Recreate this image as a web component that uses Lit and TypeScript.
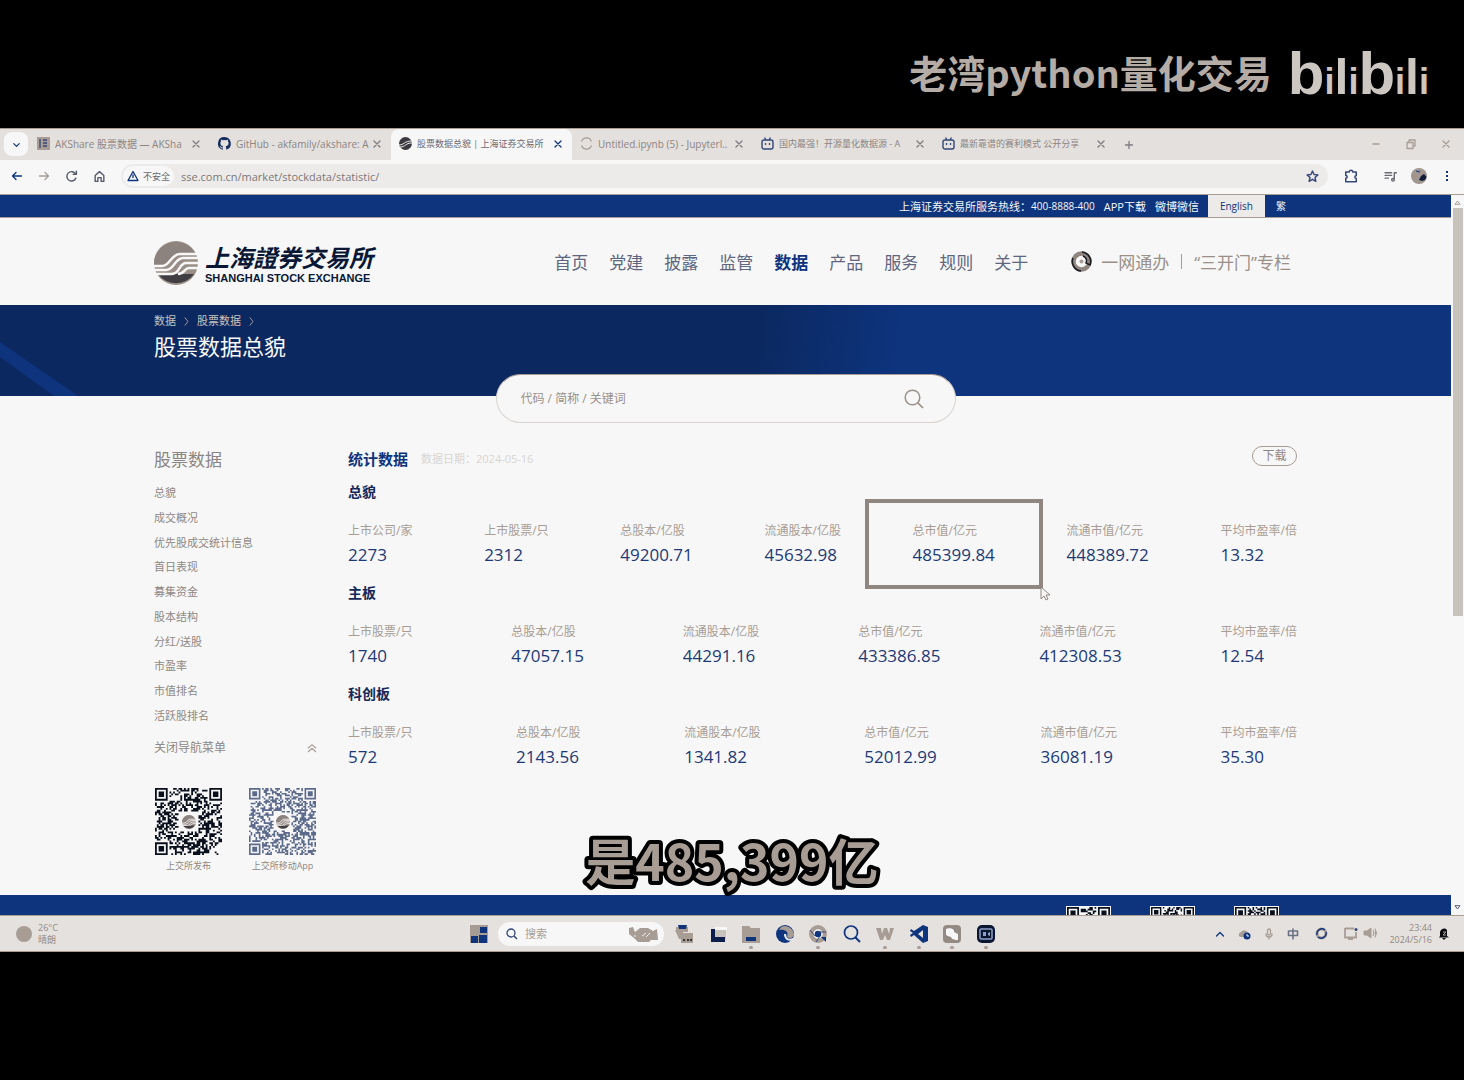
import { LitElement, html, svg, css, nothing, type TemplateResult } from "lit";
import { customElement, property } from "lit/decorators.js";
import { classMap } from "lit/directives/class-map.js";

const BLUE = "#0e347e";
const TAUPE = "#a89d95";

const shared = css`
  * { box-sizing: border-box; }
  button, input { font: inherit; color: inherit; border: 0; background: none; padding: 0; margin: 0; outline: 0; }
  a { color: inherit; text-decoration: none; }
  ul, dl, dd, h1, h2, h3, p { margin: 0; padding: 0; list-style: none; font-weight: inherit; font-size: inherit; }
  svg { display: block; flex: none; }
`;

/** Builds the dark modules of a QR-like symbol as a single path. */
function qrPath(n: number, seed: number): string {
  const finder = (x: number, y: number): boolean | null => {
    for (const [fx, fy] of [[0, 0], [n - 7, 0], [0, n - 7]]) {
      const dx = x - fx, dy = y - fy;
      if (dx >= -1 && dx <= 7 && dy >= -1 && dy <= 7) {
        const r = Math.max(Math.abs(dx - 3), Math.abs(dy - 3));
        return r === 3 || r <= 1;
      }
    }
    return null;
  };
  let s = seed, d = "";
  for (let y = 0; y < n; y++) {
    for (let x = 0; x < n; x++) {
      s = (s * 1103515245 + 12345) & 0x7fffffff;
      const mid = Math.max(Math.abs(x - n / 2 + 0.5), Math.abs(y - n / 2 + 0.5)) < n * 0.14;
      const f = finder(x, y);
      const on = f === null ? !mid && ((s >> 16) & 15) < 8 : f;
      if (on) d += `M${x} ${y}h1v1h-1z`;
    }
  }
  return d;
}

const emblem = (size: number) => svg`
  <svg width=${size} height=${size} viewBox="0 0 44 44" aria-hidden="true">
    <circle cx="22" cy="22" r="22" fill="#9a8f88"/>
    <path d="M3 12A22 22 0 0 1 41 12L24 12C16 12 15 25 8 25L0 25A22 22 0 0 1 3 12Z" fill="#8c837f"/>
    <path d="M4 33H40A22 22 0 0 1 4 33Z" fill="#403e42"/>
    <g fill="none" stroke="#f7f7f7" stroke-width="2.4">
      <path d="M0 25h8c8 0 9-12 18-12h18"/>
      <path d="M0 29h12c8 0 9-12 17-12h15"/>
      <path d="M0 33h18c8 0 7-11 14-11h12"/>
      <path d="M24 33c7 0 6-6 11-6h9"/>
    </g>
  </svg>`;

@customElement("qr-code")
export class QrCode extends LitElement {
  @property({ type: Number }) modules = 37;
  @property({ type: Number }) size = 67;
  @property() color = "#0a0f1c";
  @property({ type: Boolean }) plain = false;
  static styles = [shared, css`
    :host { display: grid; place-items: center; }
    svg { grid-area: 1 / 1; }
  `];
  render() {
    const n = this.modules;
    return html`
      <svg width=${this.size} height=${this.size} viewBox="0 0 ${n} ${n}" role="img" aria-label="二维码">
        <path d=${qrPath(n, n * 97 + this.size)} fill=${this.color}></path>
      </svg>
      ${this.plain ? nothing : emblem(14)}`;
  }
}

interface Tab { icon: string; title: string; active?: boolean; small?: boolean }
const TABS: Tab[] = [
  { icon: "book", title: "AKShare 股票数据 — AKSha" },
  { icon: "github", title: "GitHub - akfamily/akshare: A" },
  { icon: "sse", title: "股票数据总貌 | 上海证券交易所", active: true, small: true },
  { icon: "ring", title: "Untitled.ipynb (5) - Jupyterl.." },
  { icon: "bili", title: "国内最强！开源量化数据源 - A", small: true },
  { icon: "bili", title: "最新靠谱的赛利模式 公开分享", small: true },
];

const tabIcons: Record<string, TemplateResult<2>> = {
  book: svg`<svg width="13" height="13" viewBox="0 0 13 13"><path d="M0 0h13v13H0z" fill="#a89d95"/><path d="M3 2v9M6 3h4M6 6h4M6 9h4" stroke="#34477a" stroke-width="1.3"/></svg>`,
  github: svg`<svg width="13" height="13" viewBox="0 0 16 16"><path fill="#152b5e" d="M8 0a8 8 0 0 0-2.5 15.6c.4.1.5-.2.5-.4v-1.4c-2.200.500-2.700-1-2.700-1-.400-.900-.900-1.200-.900-1.200-.700-.500.100-.500.100-.500.800.100 1.200.800 1.200.800.700 1.200 1.900.900 2.300.700.100-.500.300-.900.500-1.100-1.800-.200-3.600-.900-3.600-4 0-.900.300-1.600.800-2.100-.100-.200-.400-1 .100-2.100 0 0 .700-.200 2.200.800a7.500 7.500 0 0 1 4 0c1.500-1 2.200-.800 2.200-.800.400 1.100.200 1.900.100 2.100.500.600.800 1.300.800 2.100 0 3.100-1.900 3.700-3.700 3.900.300.300.600.800.600 1.500v2.200c0 .200.100.500.500.400A8 8 0 0 0 8 0z"/></svg>`,
  sse: svg`<svg width="13" height="13" viewBox="0 0 13 13"><circle cx="6.500" cy="6.500" r="6.500" fill="#3c3a40"/><path d="M0 8c5 0 5-4 13-4M1 10c6 0 5-4 12-4" stroke="#f0eeec" stroke-width="1" fill="none"/></svg>`,
  ring: svg`<svg width="13" height="13" viewBox="0 0 13 13"><path d="M1.500 4.500a5.300 5.300 0 0 1 10 0M1.500 8.500a5.300 5.300 0 0 0 10 0" stroke="#a89d95" stroke-width="1.200" fill="none"/></svg>`,
  bili: svg`<svg width="13" height="13" viewBox="0 0 13 13"><rect x="1" y="3" width="11" height="9" rx="2" fill="none" stroke="#34477a" stroke-width="1.400"/><path d="M3.500.5 5 3M9.500.5 8 3M4.500 6v2M8.500 6v2" stroke="#34477a" stroke-width="1.300"/></svg>`,
};

const line = (d: string, size = 12, color = BLUE, w = 1.3) => svg`
  <svg width=${size} height=${size} viewBox="0 0 12 12" aria-hidden="true">
    <path d=${d} fill="none" stroke=${color} stroke-width=${w} stroke-linecap="round" stroke-linejoin="round"/>
  </svg>`;
const CROSS = "M3 3l6 6M9 3l-6 6";

@customElement("browser-chrome")
export class BrowserChrome extends LitElement {
  static styles = [shared, css`
    :host { display: block; color: #8d8583; font-family: "Open Sans", "Noto Sans CJK SC", sans-serif; }
    .tabs { display: flex; align-items: stretch; height: 32px; background: #e3e0dd; border-top: 1px solid #a89d95; }
    .menu { width: 24px; height: 24px; margin: 3px 1px 0 4px; border-radius: 8px; background: #f7f7f7; display: grid; place-items: center; }
    .tab { flex: 0 1 181px; min-width: 0; display: flex; align-items: center; gap: 5px; padding: 0 8px 2px; font-size: 10px; border-radius: 8px 8px 0 0; }
    .tab.active { background: #f7f7f7; color: #6d6a73; }
    .tab.small { font-size: 9px; }
    .title { flex: 1; min-width: 0; white-space: nowrap; }
    .plus { width: 24px; margin-left: 2px; display: grid; place-items: center; }
    .win { margin-left: auto; display: flex; align-items: center; gap: 23px; padding: 0 12px 2px 0; }
    .bar { display: flex; align-items: center; height: 35px; padding: 0 11px 2px; background: #f7f7f7; border-bottom: 1px solid #a89d95; }
    .nav { display: flex; gap: 15px; padding-right: 15px; }
    .nav button { display: block; }
    .url { flex: 1; display: flex; align-items: center; height: 24px; margin-right: 16px; padding: 0 9px 0 2px; gap: 7px; background: #edebe9; border-radius: 12px; font-size: 11px; }
    .safe { display: flex; align-items: center; gap: 4px; height: 20px; padding: 0 4px; border-radius: 10px; background: #f7f7f7; font-size: 9px; color: #6d6a73; }
    .url input { flex: 1; min-width: 0; color: #7c7777; }
    .tools { display: flex; align-items: center; gap: 14px; }
    .gap { margin-left: 12px; }
  `];
  render() {
    return html`
      <div class="tabs">
        <button class="menu" aria-label="搜索标签页">${line("M3 5l3 3 3-3", 11)}</button>
        ${TABS.map((t) => html`
          <div class=${classMap({ tab: true, active: !!t.active, small: !!t.small })}>
            ${tabIcons[t.icon]}<span class="title">${t.title}</span>
            <button aria-label="关闭">${line(CROSS, 12, t.active ? BLUE : "#7f7b80")}</button>
          </div>`)}
        <button class="plus" aria-label="新标签页">${line("M6 2.500v7M2.500 6h7", 12, "#7f7b80")}</button>
        <div class="win">
          <button aria-label="最小化">${line("M3 6h6", 12, TAUPE)}</button>
          <button aria-label="还原">${line("M2 4.500h6v6H2zM4 4V2h6v6H8.500", 12, TAUPE)}</button>
          <button aria-label="关闭窗口">${line(CROSS, 12, TAUPE)}</button>
        </div>
      </div>
      <div class="bar">
        <div class="nav">
          <button aria-label="后退">${line("M10.500 6h-9M5 2.500L1.500 6 5 9.500")}</button>
          <button aria-label="前进">${line("M1.500 6h9M7 2.500L10.500 6 7 9.500", 12, TAUPE)}</button>
          <button aria-label="刷新">${line("M10 7.500A4.300 4.300 0 1 1 9.500 3.300M10.500 1v3h-3", 13, "#565a6c")}</button>
          <button aria-label="主页">${line("M2 5l4-3.500L10 5v5.500H7.500V7h-3v3.500H2z", 13, "#565a6c")}</button>
        </div>
        <div class="url">
          <span class="safe">${line("M6 1.500L11 10.500H1zM6 5v2.500", 12, BLUE)}不安全</span>
          <input aria-label="地址" .value=${"sse.com.cn/market/stockdata/statistic/"} />
          <button aria-label="收藏">${line("M6 1l1.400 3.200 3.600.3-2.700 2.400.8 3.600L6 8.600l-3.100 1.900.8-3.600L1 4.500l3.600-.3z", 13, "#34477a")}</button>
        </div>
        <div class="tools">
          <button aria-label="扩展">${line("M1.500 2.500h3a1.500 1.500 0 0 1 3 0h3v3.200a1.200 1.200 0 0 0 0 2.400V11h-9V8a1.200 1.200 0 0 0 0-2.400z", 14, "#34477a")}</button>
          <button class="gap" aria-label="媒体">${line("M1 2.500h6M1 5h6M1 7.500h3M9.500 9V2.500H11.500M9.500 9a1.200 1.200 0 1 1-2.400 0 1.200 1.200 0 0 1 2.400 0", 13, "#6d6a73")}</button>
          <button aria-label="用户">
            <svg width="16" height="16" viewBox="0 0 16 16"><circle cx="8" cy="8" r="8" fill="#a0968f"/><path d="M8 12l2-4 3-2 2.500 3-1.500 3-3 1z" fill="#101c3a"/><path d="M5 3l4 1" stroke=${BLUE}/></svg>
          </button>
          <button aria-label="菜单"><svg width="12" height="12" viewBox="0 0 12 12"><path d="M5 1h2v2H5zM5 5h2v2H5zM5 9h2v2H5z" fill=${BLUE}/></svg></button>
        </div>
      </div>`;
  }
}

interface Board { name: string; stats: [string, string][]; marked?: number }
const BOARDS: Board[] = [
  { name: "总貌", marked: 4, stats: [["上市公司/家", "2273"], ["上市股票/只", "2312"], ["总股本/亿股", "49200.71"], ["流通股本/亿股", "45632.98"], ["总市值/亿元", "485399.84"], ["流通市值/亿元", "448389.72"], ["平均市盈率/倍", "13.32"]] },
  { name: "主板", stats: [["上市股票/只", "1740"], ["总股本/亿股", "47057.15"], ["流通股本/亿股", "44291.16"], ["总市值/亿元", "433386.85"], ["流通市值/亿元", "412308.53"], ["平均市盈率/倍", "12.54"]] },
  { name: "科创板", stats: [["上市股票/只", "572"], ["总股本/亿股", "2143.56"], ["流通股本/亿股", "1341.82"], ["总市值/亿元", "52012.99"], ["流通市值/亿元", "36081.19"], ["平均市盈率/倍", "35.30"]] },
];
const NAV = ["首页", "党建", "披露", "监管", "数据", "产品", "服务", "规则", "关于"];
const SIDE = ["总貌", "成交概况", "优先股成交统计信息", "首日表现", "募集资金", "股本结构", "分红/送股", "市盈率", "市值排名", "活跃股排名"];

@customElement("sse-page")
export class SsePage extends LitElement {
  static styles = [shared, css`
    :host { display: flex; background: #f7f7f7; color: #8f8884; font-family: "Open Sans", "Noto Sans CJK SC", sans-serif; }
    .page { flex: 1; min-width: 0; }
    .wrap { width: 1143px; max-width: 100%; margin: 0 auto; }
    .top { background: #0e347e; border-bottom: 1px solid #a89d95; }
    .top .wrap { display: flex; justify-content: flex-end; align-items: center; height: 22px; font-size: 11px; color: #f7f7f7; gap: 9px; }
    .hot { display: flex; align-items: center; }
    .hot span { font-size: 10px; }
    .lang { display: flex; align-items: center; height: 22px; font-size: 10px; }
    .lang a { padding: 0 11px; line-height: 22px; }
    .lang a.on { padding: 0 12px; background: #edebe9; color: #0e347e; }
    .head { display: flex; align-items: center; height: 87px; padding-right: 6px; }
    .logo { display: flex; align-items: center; gap: 7px; padding-top: 3px; color: #0a1836; }
    .cn { font: italic 700 24px/30px "Noto Sans CJK TC", sans-serif; }
    .en { font: 700 11px/13px "Liberation Sans", sans-serif; }
    .menu { display: flex; gap: 21px; margin-left: auto; font-size: 17px; color: #5f6780; }
    .menu a.on { color: #0e347e; font-weight: 700; }
    .extra { display: flex; align-items: center; gap: 9px; margin-left: 43px; font-size: 17px; color: #9a9089; }
    .extra .bar { width: 1px; height: 15px; margin: 0 3px; background: #a89d95; }
    .banner { height: 91px; background: linear-gradient(97deg, #0b2860 0 52%, #0e347e 62%); color: #f7f7f7; position: relative; overflow: hidden; }
    .stripe { position: absolute; left: 0; top: 37px; }
    .banner .wrap { position: relative; padding-top: 8px; }
    .crumb { display: flex; align-items: center; gap: 6px; font-size: 11px; line-height: 16px; color: #c9c3be; }
    .banner h1 { font-size: 22px; line-height: 34px; }
    .search { position: relative; display: flex; align-items: center; width: 460px; height: 49px; margin: -22px auto 0; padding: 0 31px 0 24px; background: #f7f7f7; border: 1px solid #d8d3cf; border-top-color: #a89d95; border-radius: 25px; font-size: 12px; }
    .search input { flex: 1; min-width: 0; color: #8f8884; }
    .search input::placeholder { color: #9a9089; opacity: 1; }
    .body { display: flex; align-items: flex-start; gap: 31px; padding-top: 23px; min-height: 472px; }
    .side { width: 163px; }
    .side h2 { font-size: 17px; line-height: 28px; color: #8a8583; }
    .side ul { display: grid; grid-auto-rows: 1fr; min-height: 247px; margin-top: 6px; font-size: 11px; }
    .side li { display: flex; align-items: center; }
    .fold { display: flex; justify-content: space-between; align-items: center; width: 100%; margin-top: 12px; font-size: 12px; line-height: 18px; }
    .codes { display: flex; justify-content: space-between; padding: 0 1px; margin-top: 31px; font-size: 9px; line-height: 14px; text-align: center; }
    .codes p { margin: 4px -6px 0; }
    .main { flex: 1; min-width: 0; display: grid; gap: 12px; }
    .bar1 { display: flex; align-items: center; height: 24px; gap: 13px; font-size: 11px; color: #d9d5d1; }
    .bar1 h2 { font-size: 15px; font-weight: 700; color: #0e347e; }
    .bar1 button { margin: -4px 0 0 auto; width: 45px; height: 20px; border: 1px solid #a89d95; border-radius: 10px; font-size: 12px; line-height: 16px; color: #8f8884; }
    .boards { display: grid; gap: 15px; }
    .board { display: grid; gap: 19px; }
    .board h3 { font-size: 14px; line-height: 20px; font-weight: 700; color: #14295a; }
    .stats { display: flex; justify-content: space-between; }
    .stat { position: relative; }
    .stat dt { font-size: 12px; line-height: 20px; color: #a89d95; }
    .stat dd { font-size: 17px; line-height: 27px; color: #1c3a78; }
    .mark { position: absolute; inset: -22px -48px -21px -48px; border: 4px solid #8f8680; }
    .cursor { position: absolute; left: 100%; top: 100%; }
    .foot { height: 20px; overflow: hidden; background: #0e347e; }
    .foot div { display: flex; justify-content: flex-end; gap: 39px; padding: 11px 18px 0 0; }
    .foot qr-code { background: #f7f7f7; padding: 1px; }
    .scroll { width: 13px; display: flex; flex-direction: column; align-items: center; gap: 1px; padding: 3px 0; }
    .thumb { width: 10px; height: 408px; background: #c8c2bd; }
    .down { margin-top: auto; }
  `];
  render() {
    return html`
      <div class="page">
        <div class="top"><div class="wrap">
          <div class="hot">上海证券交易所服务热线：<span>400-8888-400</span></div>
          <a href="#">APP下载</a><a href="#">微博微信</a>
          <div class="lang"><a class="on" href="#">English</a><a href="#">繁</a></div>
        </div></div>
        <header class="wrap head">
          <a class="logo" href="#">${emblem(44)}
            <span><div class="cn">上海證券交易所</div><div class="en">SHANGHAI STOCK EXCHANGE</div></span>
          </a>
          <nav class="menu">${NAV.map((n) => html`<a class=${n === "数据" ? "on" : ""} href="#">${n}</a>`)}</nav>
          <div class="extra">
            <svg width="21" height="21" viewBox="0 0 21 21"><circle cx="10.500" cy="10.500" r="8" fill="none" stroke="#8f8680" stroke-width="4.500"/><path d="M11 1a9.500 9.500 0 0 1 8 13l-4-2a5 5 0 0 0-3-7M10 20a9.500 9.500 0 0 1-8-13" fill="none" stroke="#1b1b22" stroke-width="1.600"/><circle cx="10.500" cy="10.500" r="2" fill="#a89d95"/></svg>
            <a href="#">一网通办</a><span class="bar"></span><a href="#">“三开门”专栏</a>
          </div>
        </header>
        <section class="banner">
          <svg class="stripe" width="78" height="54" viewBox="0 0 78 54"><path d="M0 0L78 54H54L0 15z" fill=${BLUE}/></svg>
          <div class="wrap">
            <div class="crumb"><a href="#">数据</a>${line("M4 1l4 5-4 5", 9, TAUPE)}<a href="#">股票数据</a>${line("M4 1l4 5-4 5", 9, TAUPE)}</div>
            <h1>股票数据总貌</h1>
          </div>
        </section>
        <form class="search" @submit=${(e: Event) => e.preventDefault()}>
          <input aria-label="搜索" placeholder="代码 / 简称 / 关键词" />
          <button aria-label="搜索"><svg width="20" height="20" viewBox="0 0 20 20"><circle cx="8.500" cy="8.500" r="7.300" fill="none" stroke="#9a9089" stroke-width="1.500"/><path d="M14 14l5 5" stroke="#9a9089" stroke-width="1.700"/></svg></button>
        </form>
        <div class="wrap body">
          <aside class="side">
            <h2>股票数据</h2>
            <ul>${SIDE.map((s) => html`<li><a href="#">${s}</a></li>`)}</ul>
            <button class="fold">关闭导航菜单 ${line("M1.500 6L6 2l4.500 4M1.500 10.500L6 6.500l4.500 4", 10, TAUPE)}</button>
            <div class="codes">
              <div><qr-code modules="37"></qr-code><p>上交所发布</p></div>
              <div><qr-code modules="41" color="#5c6a8c"></qr-code><p>上交所移动App</p></div>
            </div>
          </aside>
          <main class="main">
            <div class="bar1"><h2>统计数据</h2><span>数据日期：2024-05-16</span><button>下载</button></div>
            <div class="boards">
              ${BOARDS.map((b) => html`
                <section class="board"><h3>${b.name}</h3>
                  <dl class="stats">${b.stats.map(([k, v], i) => html`
                    <div class="stat"><dt>${k}</dt><dd>${v}</dd>
                      ${b.marked === i ? html`<div class="mark"><svg class="cursor" width="12" height="17" viewBox="0 0 12 17"><path d="M2 2v12l3-3 2 4 2-1-2-4h4z" fill="#f7f7f7" stroke="#8f8680"/></svg></div>` : nothing}
                    </div>`)}
                  </dl>
                </section>`)}
            </div>
          </main>
        </div>
        <footer class="foot"><div class="wrap">
          ${[25, 29, 27].map((n) => html`<qr-code plain modules=${n} size="43"></qr-code>`)}
        </div></footer>
      </div>
      <div class="scroll">
        ${line("M3 8l3-4 3 4z", 9, TAUPE)}<div class="thumb"></div>
        <div class="down">${line("M3 4l3 4 3-4z", 9, "#565a6c")}</div>
      </div>`;
  }
}

const appIcons = [
  svg`<path d="M2 3h12v5H2z" fill="${TAUPE}"/><path d="M4 1h9l-1 4H5z" fill="${BLUE}"/><path d="M1 6h8v9H5zM7 9h12v10H7z" fill="${TAUPE}"/><path d="M9 16h2M13 16h2M16 16h2" stroke="#111" stroke-width="1.500"/>`,
  svg`<path d="M7 4h11v11H7z" fill="#c9c3be"/><path d="M7 3h12v3H7z" fill="#f7f7f7"/><path d="M3 5h4v8h10v5H3z" fill="#0c1f4c"/>`,
  svg`<path d="M1 2h7l2 2h9v15H1z" fill="${TAUPE}"/><path d="M5 13h10v4H5z" fill="${BLUE}"/>`,
  svg`<circle cx="10" cy="10" r="9" fill="${BLUE}"/><path d="M6 3a9 9 0 0 1 13 8c-1 4-7 4-7 1 2-4-2-7-8-6z" fill="${TAUPE}"/><path d="M10 10c0 5 4 7 8 5" fill="none" stroke="#edebe9" stroke-width="2"/>`,
  svg`<circle cx="10" cy="10" r="9" fill="${TAUPE}"/><circle cx="10" cy="10" r="4" fill="${BLUE}" stroke="#f7f7f7" stroke-width="1.500"/><path d="M2 6l5 6M18 8h-8M8 18l4-6" stroke="#34477a"/><path d="M13 13l5 5v-5z" fill="${BLUE}"/>`,
  svg`<circle cx="9" cy="8.500" r="6.500" fill="none" stroke="${BLUE}" stroke-width="1.700"/><path d="M13.500 13.500l4.500 4.500" stroke="${BLUE}" stroke-width="2"/>`,
  svg`<path d="M1 4h5l1 6 2-6h3l2 6 1-6h4l-4 12h-3l-2-5-2 5H5z" fill="${TAUPE}"/>`,
  svg`<path d="M14 1l5 2v14l-5 2L5 11l-3 2-1-2 3-2-3-2 1-2 3 2zM14 6l-5 4 5 4z" fill="${BLUE}" fill-rule="evenodd"/>`,
  svg`<rect x="1" y="1" width="18" height="18" rx="4" fill="#938a84"/><path d="M4 5c4-2 9 0 8 3l4 2v6c-3 0-6 0-7-3-2-1-5-1-5-3z" fill="#f7f7f7"/>`,
  svg`<rect x="1" y="1" width="18" height="18" rx="5" fill="#0a1530"/><rect x="4" y="5" width="12" height="10" rx="1" fill="none" stroke="#8fa0c8" stroke-width="1.500"/><path d="M7 8h3v4H7zM12 9l2-1v4l-2-1z" fill="#8fa0c8"/>`,
];
const DOTTED = new Set([2, 4, 6, 7, 8, 9]);

@customElement("task-bar")
export class TaskBar extends LitElement {
  static styles = [shared, css`
    :host { display: grid; grid-template-columns: 1fr auto 1fr; align-items: center; height: 37px; padding: 0 14px 0 16px; background: #e4e1de; border-top: 1px solid #a89d95; border-bottom: 1px solid #a89d95; font: 9px/12px "Open Sans", "Noto Sans CJK SC", sans-serif; color: #938a84; }
    .weather, .mid, .tray { display: flex; align-items: center; }
    .weather { gap: 6px; }
    .ball { width: 16px; height: 16px; border-radius: 50%; background: #a89d95; }
    .mid { gap: 10px; }
    .find { display: flex; align-items: center; gap: 7px; width: 166px; height: 24px; padding: 0 6px 0 8px; border-radius: 12px; background: #f7f7f7; font-size: 11px; }
    .find input { flex: 1; min-width: 0; }
    .find input::placeholder { color: #a89d95; opacity: 1; }
    .apps { display: flex; justify-content: space-between; width: 322px; }
    .apps button { position: relative; display: block; }
    .dot { position: absolute; left: 8px; bottom: -5px; width: 4px; height: 3px; border-radius: 2px; background: #a89d95; }
    .tray { justify-content: flex-end; gap: 12px; }
    .pair { display: flex; gap: 5px; margin-left: 4px; }
    .clock { text-align: right; }
    .tail { display: flex; align-items: center; gap: 6px; }
  `];
  render() {
    return html`
      <div class="weather"><div class="ball"></div><div>26°C<br />晴朗</div></div>
      <div class="mid">
        <button aria-label="开始"><svg width="18" height="18" viewBox="0 0 18 18"><path d="M0 0h18v18H0z" fill=${TAUPE}/><path d="M1 11h7v7H1zM9 10h8v8H9zM10 2h7v6h-7zM2 3h5v5H2z" fill=${BLUE}/><path d="M0 0h9v8H0z" fill=${TAUPE}/></svg></button>
        <label class="find">
          <svg width="12" height="12" viewBox="0 0 12 12"><circle cx="5" cy="5" r="4" fill="none" stroke="#34477a" stroke-width="1.300"/><path d="M8 8l3 3" stroke="#34477a" stroke-width="1.500"/></svg>
          <input aria-label="搜索" placeholder="搜索" />
          <svg width="30" height="16" viewBox="0 0 30 16"><path d="M1 2l4-1 2 5 5-4h8l5 3 4-2 1 11h-7l-2 2H10l-4-4-5-4z" fill=${TAUPE}/><path d="M14 10l4-3M18 11l4-4M7 9v2" stroke="#f0eeec"/></svg>
        </label>
        <div class="apps">${appIcons.map((g, i) => html`
          <button aria-label="应用 ${i + 1}"><svg width="20" height="20" viewBox="0 0 20 20">${g}</svg>${DOTTED.has(i) ? html`<span class="dot"></span>` : nothing}</button>`)}
        </div>
      </div>
      <div class="tray">
        ${line("M2.500 8L6 4.500 9.500 8", 12)}
        <svg width="13" height="12" viewBox="0 0 13 12"><path d="M1 8a3 3 0 0 1 2-4 4 4 0 0 1 7 1l2 4H2z" fill=${TAUPE}/><circle cx="9" cy="8" r="3.500" fill=${BLUE}/><path d="M9 6v2h2" stroke="#f7f7f7" fill="none"/></svg>
        ${line("M6 1a1.500 1.500 0 0 1 1.500 1.500v3a1.500 1.500 0 0 1-3 0v-3A1.500 1.500 0 0 1 6 1M3 6a3 3 0 0 0 6 0M6 9v2", 12, TAUPE)}
        ${line("M1.500 3h9v4.500h-9zM6 1v10", 12, "#6b7287", 1.6)}
        <span class="pair"><svg width="13" height="13" viewBox="0 0 13 13"><circle cx="6.500" cy="6.500" r="4.500" fill="none" stroke=${TAUPE} stroke-width="3"/><path d="M2 8a5 5 0 0 1 8-5M11 5a5 5 0 0 1-8 5" stroke=${BLUE} stroke-width="1.400" fill="none"/></svg></span>
        <span class="pair"><svg width="14" height="13" viewBox="0 0 14 13"><path d="M1 1.500h9M1 1v9.500h11V5M4 12h5" stroke=${TAUPE} stroke-width="1.800" fill="none"/><circle cx="12" cy="2.500" r="1.500" fill="#34477a"/></svg>
        <svg width="14" height="12" viewBox="0 0 14 12"><path d="M1 4h3l4-3v10L4 8H1zM10 3l1 3-1 3M12 1.500l1.500 4.500L12 10.500" fill=${TAUPE} stroke=${TAUPE}/></svg></span>
        <div class="tail"><div class="clock">23:44<br />2024/5/16</div>
          <svg width="12" height="13" viewBox="0 0 12 13"><path d="M2 9V5a4 4 0 0 1 7-2v6l2 1.500H1zM4 11h4l-2 2z" fill="#0a0a10"/><path d="M5 5h3l-3 3h3" stroke="#a89d95" fill="none"/></svg></div>
      </div>`;
  }
}

@customElement("app-root")
export class AppRoot extends LitElement {
  static styles = [shared, css`
    :host { display: block; min-height: 100vh; background: #000; }
    .brand { display: flex; justify-content: flex-end; align-items: center; gap: 16px; height: 128px; padding: 16px 35px 0 0; color: #b5aca5; }
    .author { font: 700 38px/48px "Noto Sans CJK SC", sans-serif; }
    .mark { font: 700 50px/60px "Liberation Sans", sans-serif; padding-top: 12px; color: #cdc7c2; }
    .mark .tall { font-size: 60px; }
    .mark .low { font-size: 36px; }
    .screen { position: relative; }
    .caption { position: absolute; left: 0; bottom: 48px; width: 100%; height: 80px; font: 700 50px "Noto Sans CJK SC", sans-serif; fill: #a89d95; stroke: #000; stroke-width: 8px; stroke-linejoin: round; paint-order: stroke fill; pointer-events: none; }
  `];
  render() {
    const half = html`<span class="tall">b</span><span class="low">i</span>l<span class="low">i</span>`;
    return html`
      <div class="brand"><span class="author">老湾python量化交易</span><span class="mark">${half}${half}</span></div>
      <div class="screen">
        <browser-chrome></browser-chrome>
        <sse-page></sse-page>
        <task-bar></task-bar>
        <svg class="caption"><text x="50%" y="57" text-anchor="middle">是485,399亿</text></svg>
      </div>`;
  }
}
